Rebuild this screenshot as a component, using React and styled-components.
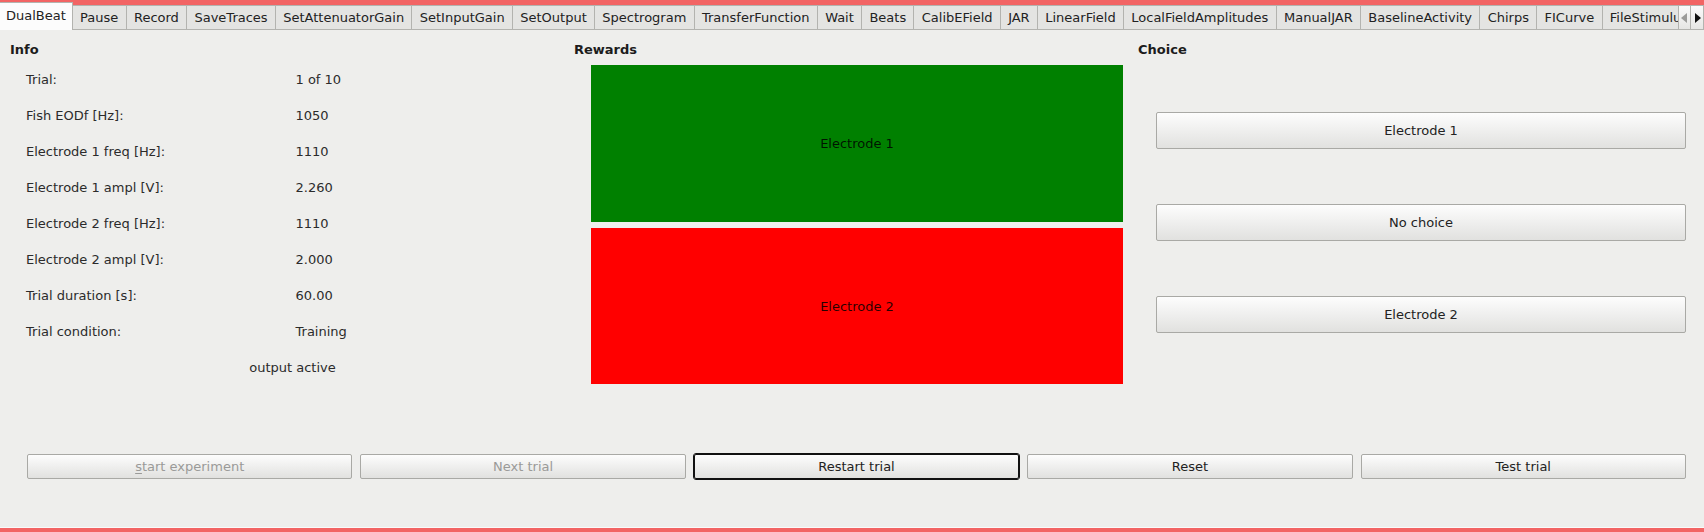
import React from 'react';
import styled, { createGlobalStyle } from 'styled-components';

const GlobalStyle = createGlobalStyle`
    html, body {
        margin: 0;
        padding: 0;
        background: #eeeeec;
    }
    * {
        box-sizing: border-box;
    }
`;

const Window = styled.div`
    width: 1704px;
    height: 532px;
    display: flex;
    flex-direction: column;
    padding: 2px 0 4px;
    background-color: #f26464;
    font-family: "DejaVu Sans", "Noto Sans", sans-serif;
    font-size: 13px;
    color: #2b2b2b;
    overflow: hidden;
`;

const TabBar = styled.div`
    display: flex;
    align-items: flex-end;
    height: 28px;
    flex: none;
`;

const TabList = styled.div`
    display: flex;
    align-items: flex-end;
    flex: 1;
    min-width: 0;
    height: 100%;
    overflow: hidden;
`;

const Tab = styled.div`
    flex: none;
    display: flex;
    align-items: center;
    height: ${props => (props.active ? '28px' : '25px')};
    padding: 0 ${props => (props.active ? '6px' : '7.3px')};
    padding-bottom: ${props => (props.active ? '3px' : '0')};
    white-space: nowrap;
    background-color: ${props => (props.active ? '#fcfcfc' : '#e4e4e2')};
    border: 1px solid #b3b3af;
    border-left: none;
    border-bottom: ${props => (props.active ? 'none' : '1px solid #b3b3af')};
    color: #222;
`;

const ScrollButtons = styled.div`
    display: flex;
    flex: none;
    height: 25px;
    border-bottom: 1px solid #b3b3af;
`;

const ArrowButton = styled.div`
    width: 13px;
    height: 100%;
    display: flex;
    align-items: center;
    justify-content: center;
    background: linear-gradient(#fbfbfb, #e6e6e4);
    border: 1px solid #b3b3af;
    border-bottom: none;
    border-left: ${props => (props.first ? '1px solid #b3b3af' : 'none')};
`;

const Pane = styled.div`
    flex: 1;
    display: flex;
    flex-direction: column;
    background-color: #eeeeec;
    border-bottom: 1px solid #fafafa;
`;

const Columns = styled.div`
    display: grid;
    grid-template-columns: repeat(3, 554px);
    column-gap: 10px;
    padding: 12px 0 0 10px;
`;

const Column = styled.section`
    display: flex;
    flex-direction: column;
`;

const Header = styled.h2`
    margin: 0;
    font-size: 13px;
    line-height: 16px;
    font-weight: bold;
    color: #1c1c1c;
`;

const InfoGrid = styled.div`
    display: grid;
    grid-template-columns: 1fr 1fr;
    grid-auto-rows: 36px;
    column-gap: 6px;
    align-items: center;
    margin-top: 3px;
    padding: 0 5px 0 16px;
`;

const Cell = styled.div`
    white-space: nowrap;
    grid-column: ${props => (props.wide ? '1 / -1' : 'auto')};
    text-align: ${props => (props.wide ? 'center' : 'left')};
`;

const RewardStack = styled.div`
    display: flex;
    flex-direction: column;
    gap: 6px;
    margin-top: 7px;
    padding: 0 5px 0 17px;
`;

const RewardBox = styled.div`
    height: ${props => props.h}px;
    display: flex;
    align-items: center;
    justify-content: center;
    background-color: ${props => props.color};
    color: rgba(0, 0, 0, 0.85);
`;

const ChoiceStack = styled.div`
    display: flex;
    flex-direction: column;
    gap: 55px;
    margin-top: 7px;
    padding: 47px 6px 0 18px;
`;

const Button = styled.button`
    height: ${props => (props.tall ? '37px' : '25px')};
    margin: 0;
    padding: 0 8px;
    font-family: inherit;
    font-size: 13px;
    color: ${props => (props.disabled ? '#9a9a98' : '#222')};
    background: linear-gradient(#fdfdfd, #e1e1df);
    border: 1px solid ${props => (props.isDefault ? '#111' : '#a9a9a5')};
    outline: ${props => (props.isDefault ? '1px solid #111' : 'none')};
    border-radius: 2px;
    cursor: default;

    u {
        text-decoration-thickness: 1px;
        text-underline-offset: 2px;
    }
`;

const ButtonRow = styled.div`
    display: grid;
    grid-template-columns: repeat(5, 1fr);
    column-gap: 8px;
    margin-top: 69px;
    padding: 0 18px 0 27px;
`;

const tabs = [
    'DualBeat', 'Pause', 'Record', 'SaveTraces', 'SetAttenuatorGain', 'SetInputGain',
    'SetOutput', 'Spectrogram', 'TransferFunction', 'Wait', 'Beats', 'CalibEField',
    'JAR', 'LinearField', 'LocalFieldAmplitudes', 'ManualJAR', 'BaselineActivity',
    'Chirps', 'FICurve', 'FileStimulus'
];

const info = [
    ['Trial:', '1 of 10'],
    ['Fish EODf [Hz]:', '1050'],
    ['Electrode 1 freq [Hz]:', '1110'],
    ['Electrode 1 ampl [V]:', '2.260'],
    ['Electrode 2 freq [Hz]:', '1110'],
    ['Electrode 2 ampl [V]:', '2.000'],
    ['Trial duration [s]:', '60.00'],
    ['Trial condition:', 'Training'],
];

const Arrow = ({ dir, color }) => (
    <svg width="7" height="10" viewBox="0 0 7 10">
        {dir === 'left'
            ? <polygon points="6,0 6,10 0,5" fill={color} />
            : <polygon points="1,0 1,10 7,5" fill={color} />}
    </svg>
);

const App = () => {
    return (
        <>
            <GlobalStyle />
            <Window>
                <TabBar>
                    <TabList>
                        {tabs.map((name, i) => (
                            <Tab key={name} active={i === 0}>{name}</Tab>
                        ))}
                    </TabList>
                    <ScrollButtons>
                        <ArrowButton first><Arrow dir="left" color="#9c9c9a" /></ArrowButton>
                        <ArrowButton><Arrow dir="right" color="#111" /></ArrowButton>
                    </ScrollButtons>
                </TabBar>
                <Pane>
                    <Columns>
                        <Column>
                            <Header>Info</Header>
                            <InfoGrid>
                                {info.map(([label, value]) => (
                                    <React.Fragment key={label}>
                                        <Cell>{label}</Cell>
                                        <Cell>{value}</Cell>
                                    </React.Fragment>
                                ))}
                                <Cell wide>output active</Cell>
                            </InfoGrid>
                        </Column>
                        <Column>
                            <Header>Rewards</Header>
                            <RewardStack>
                                <RewardBox h={157} color="#008000">Electrode 1</RewardBox>
                                <RewardBox h={156} color="#ff0000">Electrode 2</RewardBox>
                            </RewardStack>
                        </Column>
                        <Column>
                            <Header>Choice</Header>
                            <ChoiceStack>
                                <Button tall>Electrode 1</Button>
                                <Button tall>No choice</Button>
                                <Button tall>Electrode 2</Button>
                            </ChoiceStack>
                        </Column>
                    </Columns>
                    <ButtonRow>
                        <Button disabled><u>s</u>tart experiment</Button>
                        <Button disabled>Next trial</Button>
                        <Button isDefault>Restart trial</Button>
                        <Button>Reset</Button>
                        <Button>Test trial</Button>
                    </ButtonRow>
                </Pane>
            </Window>
        </>
    );
};

export default App;
